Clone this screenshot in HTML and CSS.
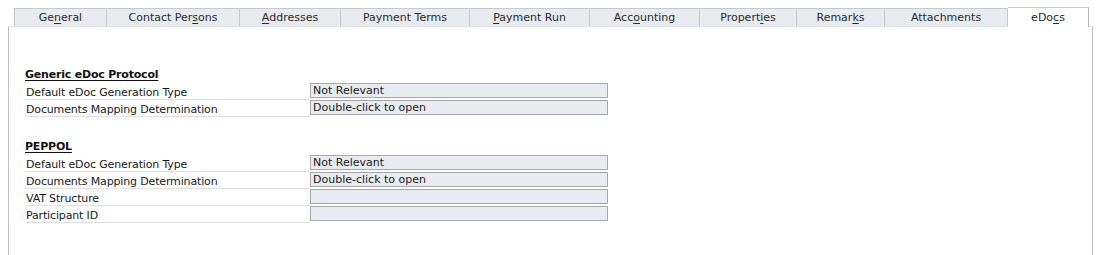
FILE: index.html
```html
<!DOCTYPE html>
<html>
<head>
<meta charset="utf-8">
<link rel="stylesheet" href="styles.css">
</head>
<body>
<div class="window">
  <div class="tabs">
    <div class="tab w1">Ge<u>n</u>eral</div>
    <div class="tab w2">Contact Per<u>s</u>ons</div>
    <div class="tab w3"><u>A</u>ddresses</div>
    <div class="tab w4">Payment Terms</div>
    <div class="tab w5"><u>P</u>ayment Run</div>
    <div class="tab w6">Acc<u>o</u>unting</div>
    <div class="tab w7">Propert<u>i</u>es</div>
    <div class="tab w8">Remar<u>k</u>s</div>
    <div class="tab w9">Attachments</div>
    <div class="tab w10 active">eDo<u>c</u>s</div>
  </div>
  <div class="panel">
    <div class="section first">
      <div class="heading">Generic eDoc Protocol</div>
      <div class="row"><div class="label">Default eDoc Generation Type</div><div class="field">Not Relevant</div></div>
      <div class="row"><div class="label">Documents Mapping Determination</div><div class="field">Double-click to open</div></div>
    </div>
    <div class="section">
      <div class="heading">PEPPOL</div>
      <div class="row"><div class="label">Default eDoc Generation Type</div><div class="field">Not Relevant</div></div>
      <div class="row"><div class="label">Documents Mapping Determination</div><div class="field">Double-click to open</div></div>
      <div class="row"><div class="label">VAT Structure</div><div class="field"></div></div>
      <div class="row"><div class="label">Participant ID</div><div class="field"></div></div>
    </div>
  </div>
</div>
</body>
</html>
```
FILE: styles.css
```css
html, body {
  margin: 0;
  padding: 0;
  background: #ffffff;
}
body {
  font-family: "DejaVu Sans", Verdana, sans-serif;
  font-size: 11px;
  color: #1a1a1a;
}
.window {
  padding: 7px 0 0 8px;
}
.tabs {
  display: flex;
  margin-left: 6px;
  height: 19px;
  align-items: flex-end;
  position: relative;
  z-index: 1;
}
.tab {
  box-sizing: border-box;
  height: 18px;
  background: #e8ecf0;
  border: 1px solid #c8c8c8;
  border-left: none;
  border-bottom: none;
  text-align: center;
  line-height: 17px;
  color: #2a2a2a;
}
.tab.w1 { border-left: 1px solid #c8c8c8; }
.tab u { text-decoration-thickness: 1px; text-underline-offset: 2px; }
.tab.active {
  background: #ffffff;
  height: 20px;
  margin-bottom: -1px;
  border-right-color: #b8b8b8;
  line-height: 19px;
}
.w1 { width: 93px; }
.w2 { width: 133px; }
.w3 { width: 101px; }
.w4 { width: 129px; }
.w5 { width: 120px; }
.w6 { width: 110px; }
.w7 { width: 97px; }
.w8 { width: 88px; }
.w9 { width: 123px; }
.w10 { width: 81px; }
.panel {
  box-sizing: border-box;
  width: 1085px;
  height: 229px;
  border-top: 1px solid #e2e2e2;
  border-left: 1px solid #c0c0c0;
  border-right: 1px solid #c0c0c0;
  padding: 0 0 0 16px;
}
.section.first { padding-top: 41px; }
.section { padding-top: 23px; }
.heading {
  font-weight: bold;
  text-decoration: underline;
  text-underline-offset: 2px;
  height: 15px;
  line-height: 14px;
  color: #111;
  letter-spacing: -0.2px;
}
.row {
  display: flex;
  height: 17px;
  align-items: flex-start;
}
.label {
  box-sizing: border-box;
  width: 285px;
  height: 17px;
  border-bottom: 1px solid #e0e0e0;
  line-height: 17px;
  padding-top: 1px;
  padding-left: 1px;
  letter-spacing: -0.15px;
}
.field {
  box-sizing: border-box;
  width: 298px;
  height: 15px;
  background: #e8ecf0;
  border: 1px solid #a9a9a9;
  line-height: 13px;
  padding-left: 2px;
}
```
